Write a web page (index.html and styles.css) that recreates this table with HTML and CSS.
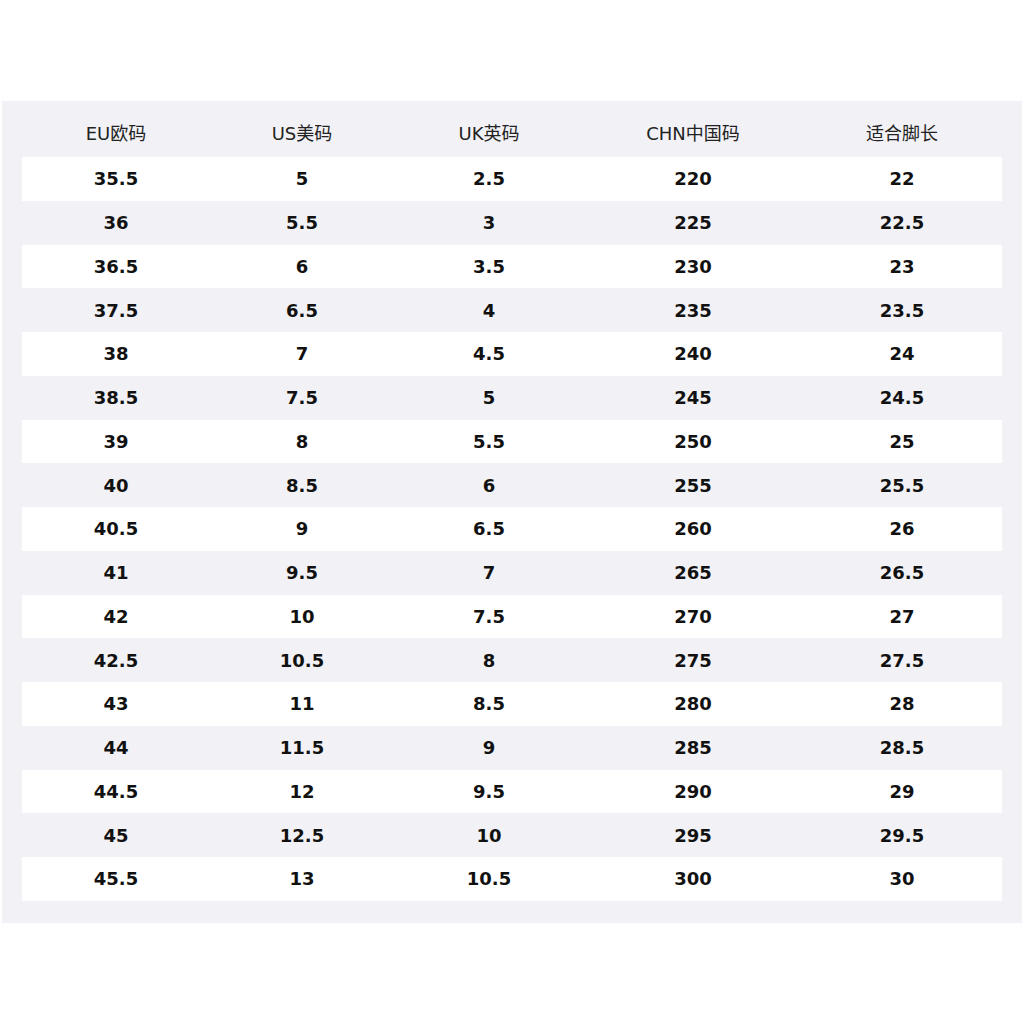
FILE: index.html
```html
<!DOCTYPE html>
<html lang="zh-CN">
<head>
<meta charset="utf-8">
<link rel="stylesheet" href="styles.css">
</head>
<body>
<div class="panel">
  <div class="row head">
    <div>EU欧码</div><div>US美码</div><div>UK英码</div><div>CHN中国码</div><div>适合脚长</div>
  </div>
  <div class="row w"><div>35.5</div><div>5</div><div>2.5</div><div>220</div><div>22</div></div>
  <div class="row"><div>36</div><div>5.5</div><div>3</div><div>225</div><div>22.5</div></div>
  <div class="row w"><div>36.5</div><div>6</div><div>3.5</div><div>230</div><div>23</div></div>
  <div class="row"><div>37.5</div><div>6.5</div><div>4</div><div>235</div><div>23.5</div></div>
  <div class="row w"><div>38</div><div>7</div><div>4.5</div><div>240</div><div>24</div></div>
  <div class="row"><div>38.5</div><div>7.5</div><div>5</div><div>245</div><div>24.5</div></div>
  <div class="row w"><div>39</div><div>8</div><div>5.5</div><div>250</div><div>25</div></div>
  <div class="row"><div>40</div><div>8.5</div><div>6</div><div>255</div><div>25.5</div></div>
  <div class="row w"><div>40.5</div><div>9</div><div>6.5</div><div>260</div><div>26</div></div>
  <div class="row"><div>41</div><div>9.5</div><div>7</div><div>265</div><div>26.5</div></div>
  <div class="row w"><div>42</div><div>10</div><div>7.5</div><div>270</div><div>27</div></div>
  <div class="row"><div>42.5</div><div>10.5</div><div>8</div><div>275</div><div>27.5</div></div>
  <div class="row w"><div>43</div><div>11</div><div>8.5</div><div>280</div><div>28</div></div>
  <div class="row"><div>44</div><div>11.5</div><div>9</div><div>285</div><div>28.5</div></div>
  <div class="row w"><div>44.5</div><div>12</div><div>9.5</div><div>290</div><div>29</div></div>
  <div class="row"><div>45</div><div>12.5</div><div>10</div><div>295</div><div>29.5</div></div>
  <div class="row w"><div>45.5</div><div>13</div><div>10.5</div><div>300</div><div>30</div></div>
</div>
</body>
</html>
```
FILE: styles.css
```css
html, body {
  margin: 0;
  padding: 0;
  background: #ffffff;
}
body {
  padding: 101px 2px 0 2px;
  font-family: "DejaVu Sans", "Noto Sans CJK SC", sans-serif;
}
.panel {
  background: #f2f2f6;
  padding: 20px 20px 22px 20px;
}
.row {
  display: grid;
  grid-template-columns: 188px 184px 190px 218px 200px;
  height: 43.75px;
  align-items: center;
  text-align: center;
  font-size: 18px;
  font-weight: bold;
  color: #111;
}
.row.w {
  background: #ffffff;
}
.row.head {
  height: 36px;
  align-items: start;
  line-height: 26px;
  font-weight: normal;
  color: #222;
}
```
